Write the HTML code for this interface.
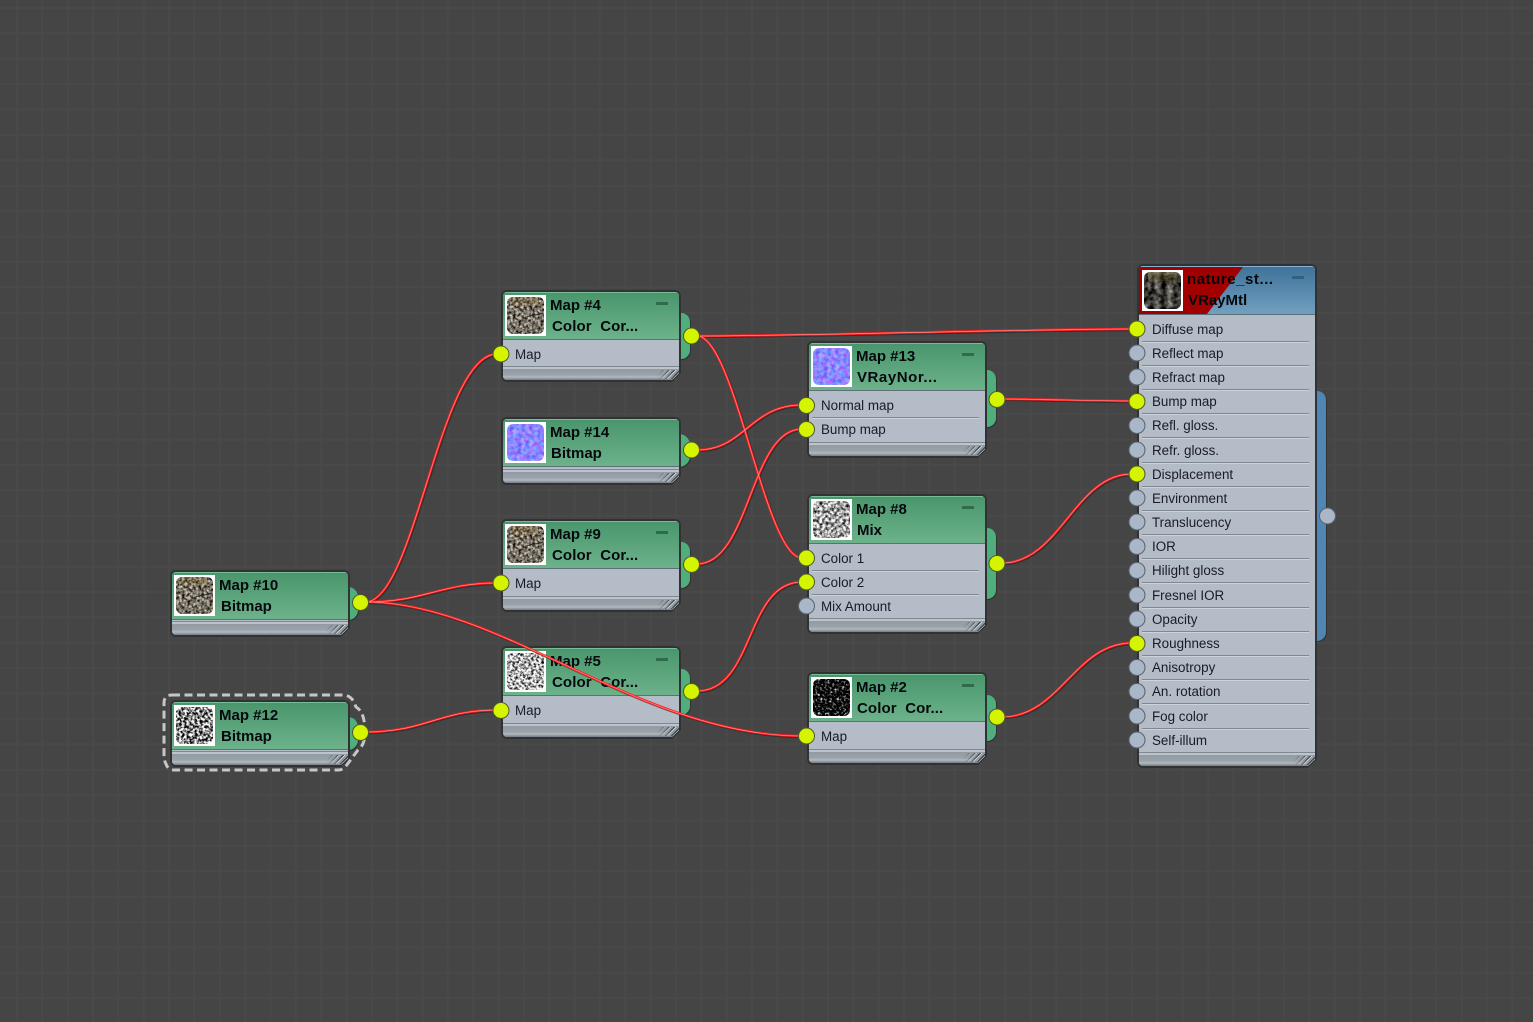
<!DOCTYPE html>
<html>
<head>
<meta charset="utf-8">
<style>
html,body{margin:0;padding:0}
body{width:1533px;height:1022px;overflow:hidden;position:relative;background-color:#454545;
background-image:linear-gradient(90deg,#494949 2px,transparent 2px),linear-gradient(#494949 2px,transparent 2px);
background-size:25.35px 25.4px;background-position:16px 7px;font-family:"Liberation Sans",sans-serif}
.tab,.n,.ov{position:absolute}
.tab{background:#50ae7d;border-radius:0 9px 9px 0;box-shadow:1px 1px 0 #333}
.tab.c{border-radius:0 15px 15px 0}
.tab.bl{background:#4f86b4}
.n{width:180px;background:#303234;border-radius:6px;clip-path:polygon(0 0,100% 0,100% calc(100% - 9px),calc(100% - 9px) 100%,0 100%)}
.b{position:absolute;left:2px;right:2px;top:2px;bottom:2px;background:#b4bdc7;border-radius:4px;clip-path:polygon(0 0,100% 0,100% calc(100% - 7px),calc(100% - 7px) 100%,0 100%);overflow:hidden}
.h{position:absolute;left:0;right:0;top:0;height:46px;background:linear-gradient(#4a966c,#6cb28b);border-top:1px solid #78bc96;border-bottom:1px solid #5f6f78}
.h.m{height:47px;background:linear-gradient(#3f7399,#719fbf);border-top-color:#86b2d0}
.f{position:absolute;left:0;right:0;bottom:0;height:14px;background:linear-gradient(#7f878f 0,#7f878f 1px,#bcc3ca 1px,#bcc3ca 3px,#929ba3 3px,#9aa3aa 9px,#b2bac2 11px,#747b82 14px)}
.hat{position:absolute;right:0;bottom:1px;width:22px;height:9px;background:repeating-linear-gradient(135deg,#2d3136 0 1px,#cfd5da 1px 2px,#8d959c 2px 4px);-webkit-mask-image:linear-gradient(90deg,transparent,#000 80%);mask-image:linear-gradient(90deg,transparent,#000 80%)}
.min{position:absolute;right:11px;top:10px;width:12px;height:3px;background:#2f6b4c}
.t{position:absolute;width:41px;height:41px;left:2px;top:3px;background:#fff;overflow:hidden}
.t svg{display:block}
.x{position:absolute;margin-top:1px;font:bold 15px/20px "Liberation Sans",sans-serif;color:#07090f;white-space:pre}
.l{position:absolute;margin-top:1px;font:13.4px/18px "Liberation Sans",sans-serif;color:#1a1a28;white-space:pre}
.r{position:absolute;left:3px;width:167px;height:1px;background:#7f8791;border-bottom:1px solid #ccd3da}
svg.ov{left:0;top:0}
</style>
</head>
<body>
<svg width="0" height="0" style="position:absolute">
<defs>
<filter id="rock" x="0" y="0" width="100%" height="100%" color-interpolation-filters="sRGB"><feTurbulence type="fractalNoise" baseFrequency=".36" numOctaves="4" seed="4"/><feColorMatrix values="1.5 0 0 0 -.28 1.45 0 0 0 -.28 1.4 0 0 0 -.3 0 0 0 0 1"/><feComposite in2="SourceAlpha" operator="in"/></filter>
<filter id="rock2" x="0" y="0" width="100%" height="100%" color-interpolation-filters="sRGB"><feTurbulence type="fractalNoise" baseFrequency=".34" numOctaves="3" seed="9"/><feColorMatrix values="1.9 0 0 0 -.32 1.9 0 0 0 -.32 1.9 0 0 0 -.32 0 0 0 0 1"/><feComposite in2="SourceAlpha" operator="in"/></filter>
<filter id="dk" x="0" y="0" width="100%" height="100%" color-interpolation-filters="sRGB"><feTurbulence type="fractalNoise" baseFrequency=".16" numOctaves="5" seed="6"/><feColorMatrix values="1.1 0 0 0 -.3 1.08 0 0 0 -.3 1.05 0 0 0 -.3 0 0 0 0 1"/><feComposite in2="SourceAlpha" operator="in"/></filter>
<filter id="bw" x="0" y="0" width="100%" height="100%" color-interpolation-filters="sRGB"><feTurbulence type="fractalNoise" baseFrequency=".38" numOctaves="3" seed="12"/><feColorMatrix values="3 0 0 0 -.98 3 0 0 0 -.98 3 0 0 0 -.98 0 0 0 0 1"/><feComposite in2="SourceAlpha" operator="in"/></filter>
<filter id="lt" x="0" y="0" width="100%" height="100%" color-interpolation-filters="sRGB"><feTurbulence type="fractalNoise" baseFrequency=".38" numOctaves="3" seed="21"/><feColorMatrix values="2.6 0 0 0 -.6 2.6 0 0 0 -.6 2.6 0 0 0 -.6 0 0 0 0 1"/><feComposite in2="SourceAlpha" operator="in"/></filter>
<filter id="blk" x="0" y="0" width="100%" height="100%" color-interpolation-filters="sRGB"><feTurbulence type="fractalNoise" baseFrequency=".42" numOctaves="3" seed="31"/><feColorMatrix values="2.6 0 0 0 -1.3 2.6 0 0 0 -1.3 2.6 0 0 0 -1.3 0 0 0 0 1"/><feComposite in2="SourceAlpha" operator="in"/></filter>
<filter id="nrm" x="0" y="0" width="100%" height="100%" color-interpolation-filters="sRGB"><feTurbulence type="fractalNoise" baseFrequency=".24" numOctaves="3" seed="5"/><feColorMatrix values=".7 0 0 0 .2 0 .7 0 0 .17 0 0 0 0 1 0 0 0 0 1"/><feComposite in2="SourceAlpha" operator="in"/></filter>
<symbol id="i1" viewBox="0 0 41 41"><rect x="2" y="2" width="37" height="37" rx="6" filter="url(#rock)"/><path d="M22,22C27,19 32,21 38,18" fill="none" stroke="#2b2b2b"/><rect x="6" y="2" width="28" height="9" fill="#8a6a2a" opacity=".25"/></symbol>
<symbol id="i2" viewBox="0 0 41 41"><rect x="2" y="2" width="37" height="37" rx="6" filter="url(#nrm)"/></symbol>
<symbol id="i3" viewBox="0 0 41 41"><rect x="2" y="2" width="37" height="37" rx="6" filter="url(#lt)"/></symbol>
<symbol id="i4" viewBox="0 0 41 41"><rect x="2" y="2" width="37" height="37" rx="6" filter="url(#bw)"/></symbol>
<symbol id="i5" viewBox="0 0 41 41"><rect x="2" y="2" width="37" height="37" rx="6" filter="url(#blk)"/></symbol>
<symbol id="i6" viewBox="0 0 41 41"><rect x="2" y="2" width="37" height="37" rx="6" filter="url(#dk)"/><rect x="6" y="2" width="29" height="9" fill="#7a6a30" opacity=".3"/></symbol>
<symbol id="i7" viewBox="0 0 41 41"><rect x="2" y="2" width="37" height="37" rx="6" filter="url(#rock2)"/></symbol>
<g id="w" fill="none">
<path d="M366,602C415,600 440,354 497,354"/>
<path d="M366,602C425,602 440,583 497,583"/>
<path d="M366,602C500,602 640,736 802,736"/>
<path d="M366,732C425,732 440,710 497,710"/>
<path d="M697,336C800,336 1030,329 1132,329"/>
<path d="M697,336C735,336 765,558 802,558"/>
<path d="M697,450C745,450 750,405 802,405"/>
<path d="M697,564C750,564 750,429 802,429"/>
<path d="M697,691C755,691 745,582 802,582"/>
<path d="M1002,399C1040,399 1090,401 1132,401"/>
<path d="M1002,563C1060,563 1075,474 1132,474"/>
<path d="M1002,717C1060,717 1075,643 1132,643"/>
</g>
</defs>
</svg>

<!-- tabs -->
<div class="tab c" style="left:348px;top:587px;width:10px;height:33px"></div>
<div class="tab c" style="left:348px;top:717px;width:10px;height:33px"></div>
<div class="tab" style="left:679px;top:313px;width:11px;height:46px"></div>
<div class="tab c" style="left:679px;top:434px;width:11px;height:33px"></div>
<div class="tab" style="left:679px;top:542px;width:11px;height:46px"></div>
<div class="tab" style="left:679px;top:669px;width:11px;height:46px"></div>
<div class="tab" style="left:985px;top:370px;width:11px;height:57px"></div>
<div class="tab" style="left:985px;top:528px;width:11px;height:71px"></div>
<div class="tab" style="left:985px;top:695px;width:11px;height:46px"></div>
<div class="tab bl" style="left:1315px;top:391px;width:11px;height:250px"></div>

<!-- Map #10 -->
<div class="n" style="left:170px;top:570px;height:67px"><div class="b"><div class="h"></div><div class="f"></div><div class="hat"></div><div class="t"><svg width="41" height="41"><use href="#i1"/></svg></div></div><div class="x" style="left:49px;top:5px">Map #10</div><div class="x" style="left:51px;top:26px">Bitmap</div></div>
<!-- Map #12 -->
<div class="n" style="left:170px;top:700px;height:67px"><div class="b"><div class="h"></div><div class="f"></div><div class="hat"></div><div class="t"><svg width="41" height="41"><use href="#i4"/></svg></div></div><div class="x" style="left:49px;top:5px">Map #12</div><div class="x" style="left:51px;top:26px">Bitmap</div></div>
<!-- Map #4 -->
<div class="n" style="left:501px;top:290px;height:92px"><div class="b"><div class="h"></div><div class="min"></div><div class="f"></div><div class="hat"></div><div class="t"><svg width="41" height="41"><use href="#i1"/></svg></div></div><div class="x" style="left:49px;top:5px">Map #4</div><div class="x" style="left:51px;top:26px;letter-spacing:.1px">Color  Cor...</div><div class="l" style="left:14px;top:55px">Map</div></div>
<!-- Map #14 -->
<div class="n" style="left:501px;top:417px;height:68px"><div class="b"><div class="h"></div><div class="f"></div><div class="hat"></div><div class="t"><svg width="41" height="41"><use href="#i2"/></svg></div></div><div class="x" style="left:49px;top:5px">Map #14</div><div class="x" style="left:50px;top:26px">Bitmap</div></div>
<!-- Map #9 -->
<div class="n" style="left:501px;top:519px;height:93px"><div class="b"><div class="h"></div><div class="min"></div><div class="f"></div><div class="hat"></div><div class="t"><svg width="41" height="41"><use href="#i1"/></svg></div></div><div class="x" style="left:49px;top:5px">Map #9</div><div class="x" style="left:51px;top:26px;letter-spacing:.1px">Color  Cor...</div><div class="l" style="left:14px;top:55px">Map</div></div>
<!-- Map #5 -->
<div class="n" style="left:501px;top:646px;height:93px"><div class="b"><div class="h"></div><div class="min"></div><div class="f"></div><div class="hat"></div><div class="t"><svg width="41" height="41"><use href="#i3"/></svg></div></div><div class="x" style="left:49px;top:5px">Map #5</div><div class="x" style="left:51px;top:26px;letter-spacing:.1px">Color  Cor...</div><div class="l" style="left:14px;top:55px">Map</div></div>
<!-- Map #13 -->
<div class="n" style="left:807px;top:341px;height:117px"><div class="b"><div class="h"></div><div class="min"></div><div class="r" style="top:74px"></div><div class="f"></div><div class="hat"></div><div class="t"><svg width="41" height="41"><use href="#i2"/></svg></div></div><div class="x" style="left:49px;top:5px">Map #13</div><div class="x" style="left:50px;top:26px;letter-spacing:.55px">VRayNor...</div><div class="l" style="left:14px;top:55px">Normal map</div><div class="l" style="left:14px;top:79px">Bump map</div></div>
<!-- Map #8 -->
<div class="n" style="left:807px;top:494px;height:140px"><div class="b"><div class="h"></div><div class="min"></div><div class="r" style="top:74px"></div><div class="r" style="top:98px"></div><div class="f"></div><div class="hat"></div><div class="t"><svg width="41" height="41"><use href="#i7"/></svg></div></div><div class="x" style="left:49px;top:5px">Map #8</div><div class="x" style="left:50px;top:26px">Mix</div><div class="l" style="left:14px;top:55px">Color 1</div><div class="l" style="left:14px;top:79px">Color 2</div><div class="l" style="left:14px;top:103px">Mix Amount</div></div>
<!-- Map #2 -->
<div class="n" style="left:807px;top:672px;height:93px"><div class="b"><div class="h"></div><div class="min"></div><div class="f"></div><div class="hat"></div><div class="t"><svg width="41" height="41"><use href="#i5"/></svg></div></div><div class="x" style="left:49px;top:5px">Map #2</div><div class="x" style="left:50px;top:26px;letter-spacing:.1px">Color  Cor...</div><div class="l" style="left:14px;top:55px">Map</div></div>
<!-- Main -->
<div class="n" style="left:1137px;top:264px;height:504px"><div class="b"><div class="h m"></div>
<svg style="position:absolute;left:0;top:1px" width="110" height="47"><polygon points="0,0 104,0 68,47 0,47" fill="#a20000"/></svg>
<div class="min" style="background:#34607f"></div>
<div class="r" style="top:75px"></div><div class="r" style="top:99px"></div><div class="r" style="top:123px"></div><div class="r" style="top:147px"></div><div class="r" style="top:171px"></div><div class="r" style="top:196px"></div><div class="r" style="top:220px"></div><div class="r" style="top:244px"></div><div class="r" style="top:268px"></div><div class="r" style="top:292px"></div><div class="r" style="top:316px"></div><div class="r" style="top:341px"></div><div class="r" style="top:365px"></div><div class="r" style="top:389px"></div><div class="r" style="top:413px"></div><div class="r" style="top:437px"></div><div class="r" style="top:462px"></div>
<div class="f"></div><div class="hat"></div><div class="t" style="left:3px;top:4px"><svg width="41" height="41"><use href="#i6"/></svg></div></div>
<div class="x" style="left:50px;top:5px;letter-spacing:.55px">nature_st...</div><div class="x" style="left:51px;top:26px">VRayMtl</div>
<div class="l" style="left:15px;top:56px">Diffuse map</div>
<div class="l" style="left:15px;top:80px">Reflect map</div>
<div class="l" style="left:15px;top:104px">Refract map</div>
<div class="l" style="left:15px;top:128px">Bump map</div>
<div class="l" style="left:15px;top:152px">Refl. gloss.</div>
<div class="l" style="left:15px;top:177px">Refr. gloss.</div>
<div class="l" style="left:15px;top:201px">Displacement</div>
<div class="l" style="left:15px;top:225px">Environment</div>
<div class="l" style="left:15px;top:249px">Translucency</div>
<div class="l" style="left:15px;top:273px">IOR</div>
<div class="l" style="left:15px;top:297px">Hilight gloss</div>
<div class="l" style="left:15px;top:322px">Fresnel IOR</div>
<div class="l" style="left:15px;top:346px">Opacity</div>
<div class="l" style="left:15px;top:370px">Roughness</div>
<div class="l" style="left:15px;top:394px">Anisotropy</div>
<div class="l" style="left:15px;top:418px">An. rotation</div>
<div class="l" style="left:15px;top:443px">Fog color</div>
<div class="l" style="left:15px;top:467px">Self-illum</div>
</div>

<svg class="ov" width="1533" height="1022">
<path d="M172,695H343Q350,695 354,702L356,707Q365,712 365,732Q365,745 358,750L346,766Q343,770 338,770H174Q168,770 166,764Q164,760 164,756V703Q164,695 172,695Z" fill="none" stroke="#c6c6c6" stroke-width="3" stroke-dasharray="8 4.5"/>
<use href="#w" stroke="#1e1e1e" stroke-opacity=".55" stroke-width="2.4" transform="translate(1 1)"/>
<use href="#w" stroke="#ff1c1c" stroke-width="2.4"/>
<use href="#w" stroke="#ff8a8a" stroke-width=".7"/>
<g fill="#d4f400" stroke="#4e5a2a" stroke-width="1">
<circle cx="360.500" cy="602.500" r="8"/><circle cx="360.500" cy="732.500" r="8"/>
<circle cx="501" cy="354" r="8"/><circle cx="501" cy="583" r="8"/><circle cx="501" cy="710.500" r="8"/>
<circle cx="691.500" cy="336" r="8"/><circle cx="691.500" cy="450" r="8"/><circle cx="691.500" cy="564.500" r="8"/><circle cx="691.500" cy="691.500" r="8"/>
<circle cx="806.500" cy="405.500" r="8"/><circle cx="806.500" cy="429.500" r="8"/><circle cx="806.500" cy="558" r="8"/><circle cx="806.500" cy="582" r="8"/><circle cx="806.500" cy="736" r="8"/>
<circle cx="997" cy="399.500" r="8"/><circle cx="997" cy="563.500" r="8"/><circle cx="997" cy="717" r="8"/>
<circle cx="1137" cy="329" r="8"/><circle cx="1137" cy="401.500" r="8"/><circle cx="1137" cy="474" r="8"/><circle cx="1137" cy="643.500" r="8"/>
</g>
<g fill="#a9b7c9" stroke="#59636e" stroke-width="1">
<circle cx="806.500" cy="606" r="8"/><circle cx="1327.500" cy="516" r="8"/>
<circle cx="1137" cy="353" r="8"/><circle cx="1137" cy="377" r="8"/><circle cx="1137" cy="425.500" r="8"/><circle cx="1137" cy="450" r="8"/><circle cx="1137" cy="498" r="8"/><circle cx="1137" cy="522" r="8"/><circle cx="1137" cy="546.500" r="8"/><circle cx="1137" cy="570.500" r="8"/><circle cx="1137" cy="595" r="8"/><circle cx="1137" cy="619" r="8"/><circle cx="1137" cy="667.500" r="8"/><circle cx="1137" cy="691.500" r="8"/><circle cx="1137" cy="716" r="8"/><circle cx="1137" cy="740" r="8"/>
</g>
</svg>
</body>
</html>
